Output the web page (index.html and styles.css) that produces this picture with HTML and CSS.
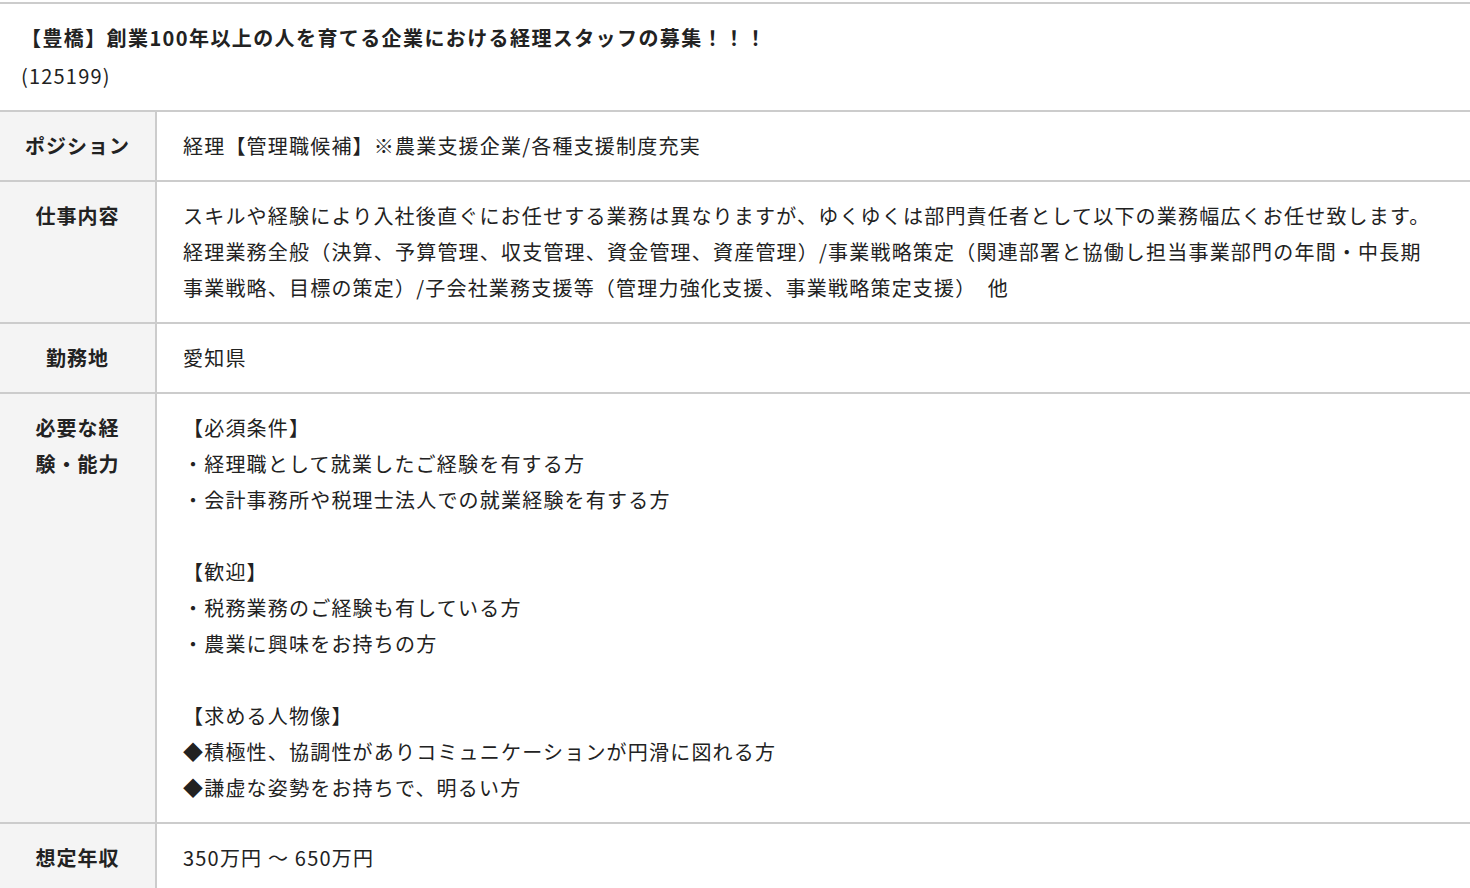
FILE: index.html
```html
<!DOCTYPE html>
<html lang="ja">
<head>
<meta charset="utf-8">
<title>求人詳細</title>
<link rel="stylesheet" href="styles.css">
</head>
<body>
<div class="job">
  <div class="head">
    <div class="title">【豊橋】創業100年以上の人を育てる企業における経理スタッフの募集！！！</div>
    <div class="code">(125199)</div>
  </div>
  <div class="row">
    <div class="label">ポジション</div>
    <div class="value">経理【管理職候補】※農業支援企業/各種支援制度充実</div>
  </div>
  <div class="row">
    <div class="label">仕事内容</div>
    <div class="value">スキルや経験により入社後直ぐにお任せする業務は異なりますが、ゆくゆくは部門責任者として以下の業務幅広くお任せ致します。<br>経理業務全般（決算、予算管理、収支管理、資金管理、資産管理）/事業戦略策定（関連部署と協働し担当事業部門の年間・中長期<br>事業戦略、目標の策定）/子会社業務支援等（管理力強化支援、事業戦略策定支援）　他</div>
  </div>
  <div class="row">
    <div class="label">勤務地</div>
    <div class="value">愛知県</div>
  </div>
  <div class="row">
    <div class="label">必要な経験・能力</div>
    <div class="value">【必須条件】<br>・経理職として就業したご経験を有する方<br>・会計事務所や税理士法人での就業経験を有する方<br><br>【歓迎】<br>・税務業務のご経験も有している方<br>・農業に興味をお持ちの方<br><br>【求める人物像】<br>◆積極性、協調性がありコミュニケーションが円滑に図れる方<br>◆謙虚な姿勢をお持ちで、明るい方</div>
  </div>
  <div class="row">
    <div class="label">想定年収</div>
    <div class="value">350万円 〜 650万円</div>
  </div>
</div>
</body>
</html>
```

FILE: styles.css
```css
html, body {
  margin: 0;
  padding: 0;
  background: #fff;
}
body {
  font-family: "Noto Sans CJK JP", "Noto Sans", sans-serif;
  color: #222;
  font-size: 20px;
  letter-spacing: 1.2px;
  line-height: 36px;
}
.job {
  margin-top: 2px;
  border-top: 2px solid #cccccc;
}
.head {
  padding: 16px 20px 16px 21px;
}
.title {
  font-weight: bold;
  letter-spacing: 1.4px;
  margin-bottom: 2px;
}
.row {
  display: grid;
  grid-template-columns: 157px 1fr;
  border-top: 2px solid #cccccc;
}
.label {
  background: #f4f4f4;
  border-right: 2px solid #cccccc;
  font-weight: bold;
  letter-spacing: 1px;
  text-align: center;
  padding: 16px 18px;
}
.value {
  padding: 16px 24px 16px 26px;
}
```
